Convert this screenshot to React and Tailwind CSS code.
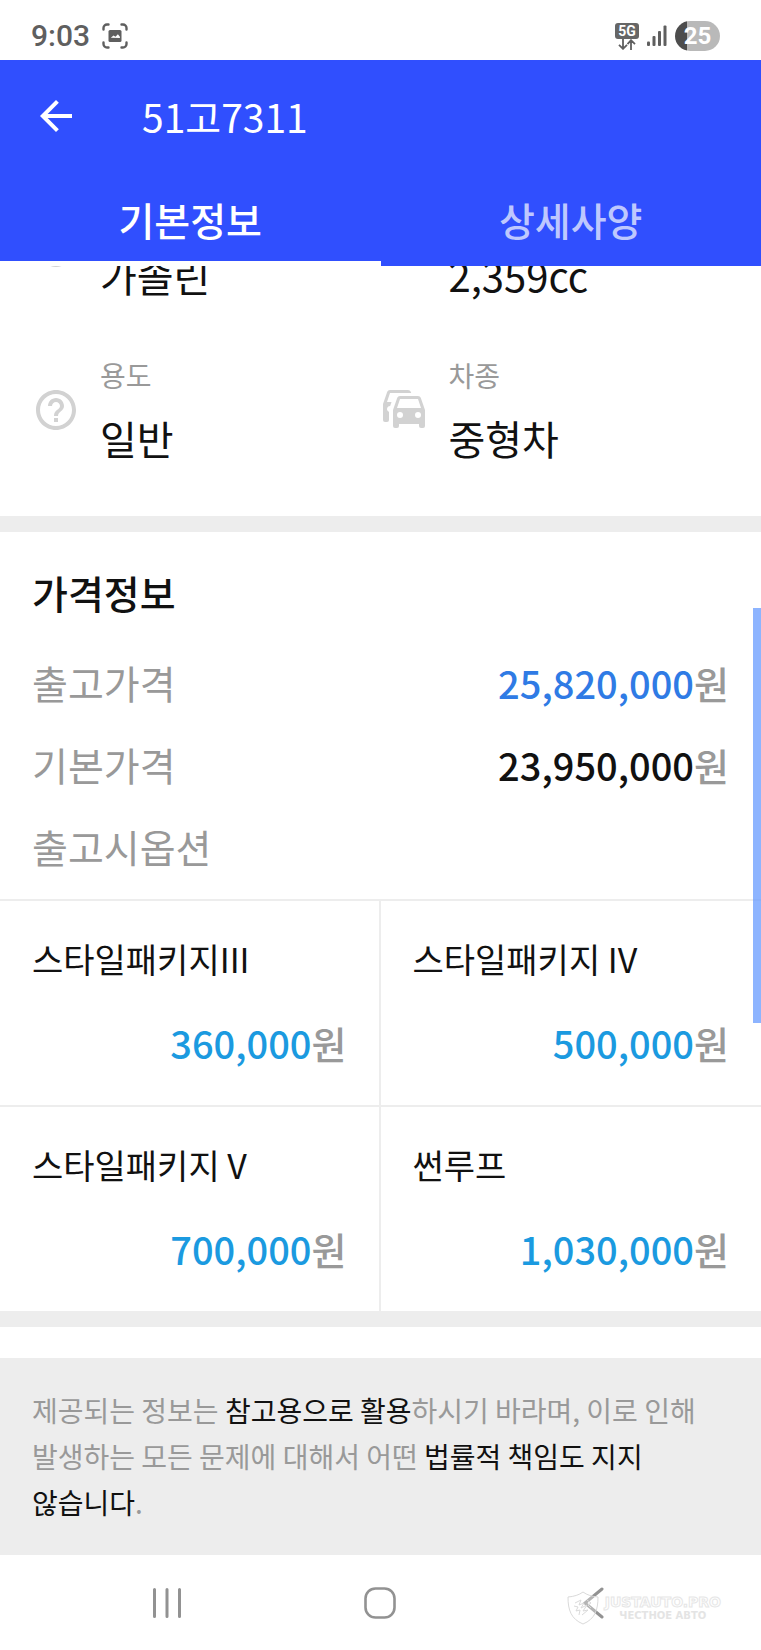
import React, { useState } from 'react';
import {
  MdArrowBack,
  MdHelpOutline,
  MdOutlineSpeed,
  MdOutlineWaterDrop,
} from 'react-icons/md';

const tabs = [
  { id: 'basic', label: '기본정보' },
  { id: 'detail', label: '상세사양' },
];

const specs = [
  { label: '연료', value: '가솔린', icon: MdOutlineWaterDrop },
  { label: '배기량', value: '2,359cc', icon: MdOutlineSpeed },
  { label: '용도', value: '일반', icon: MdHelpOutline },
  { label: '차종', value: '중형차', icon: CarsIcon },
];

const options = [
  { name: '스타일패키지III', price: '360,000' },
  { name: '스타일패키지 IV', price: '500,000' },
  { name: '스타일패키지 V', price: '700,000' },
  { name: '썬루프', price: '1,030,000' },
];

function CarsIcon({ className }) {
  return (
    <svg viewBox="0 0 24 24" fill="currentColor" className={className} aria-hidden="true">
      <path d="M8,11L9.5,6.5H18.5L20,11M18.5,16A1.5,1.5 0 0,1 17,14.5A1.5,1.5 0 0,1 18.5,13A1.5,1.5 0 0,1 20,14.5A1.5,1.5 0 0,1 18.5,16M9.5,16A1.5,1.5 0 0,1 8,14.5A1.5,1.5 0 0,1 9.5,13A1.5,1.5 0 0,1 11,14.5A1.5,1.5 0 0,1 9.5,16M19.92,6C19.71,5.4 19.14,5 18.5,5H9.5C8.86,5 8.29,5.4 8.08,6L6,12V20A1,1 0 0,0 7,21H8A1,1 0 0,0 9,20V19H19V20A1,1 0 0,0 20,21H21A1,1 0 0,0 22,20V12L19.92,6M14.92,3C14.71,2.4 14.14,2 13.5,2H4.5C3.86,2 3.29,2.4 3.08,3L1,9V17A1,1 0 0,0 2,18H3A1,1 0 0,0 4,17V12.91C3.22,12.63 2.82,11.77 3.1,11C3.32,10.4 3.87,10 4.5,10H4.57L5.27,8H3L4.5,3.5H15.09L14.92,3Z" />
    </svg>
  );
}

function StatusBar() {
  return (
    <div className="flex items-center justify-between h-[60px] pl-[31px] pr-[41px] pt-3 text-[#5f5f5f] font-['Roboto',sans-serif]">
      <div className="flex items-center gap-3">
        <span className="text-[30px] leading-8 font-medium">9:03</span>
        <svg viewBox="0 0 26 26" className="w-[26px] h-[26px]" fill="none" stroke="currentColor" strokeWidth="2.4" strokeLinecap="round" aria-hidden="true">
          <path d="M1.5 6.5V5a3.5 3.5 0 0 1 3.5-3.5h1.5M19.5 1.5H21a3.5 3.5 0 0 1 3.5 3.5v1.5M24.5 19.5V21a3.5 3.5 0 0 1-3.5 3.5h-1.5M6.5 24.5H5A3.5 3.5 0 0 1 1.5 21v-1.5" />
          <rect x="6.5" y="7" width="13" height="12" rx="1.5" fill="currentColor" stroke="none" />
          <path d="M8.8 14.8l2.7-2.2 2 1.2 2.4-2.6 2 2.6v1.2z" fill="#fff" stroke="none" />
        </svg>
      </div>

      <div className="flex items-center gap-2">
        <div className="flex flex-col items-center w-6">
          <span className="w-6 h-4 rounded-[3px] bg-[#666] text-white text-[14px] leading-4 font-bold text-center">5G</span>
          <svg viewBox="0 0 18 11" className="w-[18px] h-[11px]" fill="none" stroke="currentColor" strokeWidth="1.8" aria-hidden="true">
            <path d="M5 0v9.5M1 5.8l4 4 4-4M13 11V1.5M9.5 5.2l3.5-4 4 4" />
          </svg>
        </div>
        <svg viewBox="0 0 20 22" className="w-5 h-[22px]" fill="currentColor" aria-hidden="true">
          <rect x="0" y="16.5" width="3" height="4.5" rx="1" />
          <rect x="5.5" y="11" width="3" height="10" rx="1" />
          <rect x="11" y="6" width="3" height="15" rx="1" />
          <rect x="16.5" y="0.5" width="3" height="20.5" rx="1" />
        </svg>
        <div className="w-[45px] h-[30px] rounded-full bg-[linear-gradient(90deg,#4d4d4d_12px,#b9b9b9_12px)] text-white text-[24px] leading-[30px] font-bold text-center">
          25
        </div>
      </div>
    </div>
  );
}

function Price({ value, color }) {
  return (
    <span className="font-medium text-[#999]">
      <span className={color}>{value}</span>원
    </span>
  );
}

function PriceRow({ label, children }) {
  return (
    <div className="flex items-center justify-between h-[82px] px-8">
      <dt className="text-[39px] text-[#999]">{label}</dt>
      <dd className="text-[38px]">{children}</dd>
    </div>
  );
}

function Watermark() {
  return (
    <div className="absolute right-[40px] top-[36px] flex items-center gap-[6px] pointer-events-none">
      <svg viewBox="0 0 32 34" className="w-8 h-[34px]" fill="#ffffff50" stroke="#dadada" strokeWidth="1" aria-hidden="true">
        <path d="M16 1c4 3 9 4.500 15 5 0 13-3 22-15 27C4 28 1 19 1 6c6-.5 11-2 15-5z" />
        <path d="M8 12l6-3-2 5 5-2-3 5 6-3-4 6 5-1-6 5M7 15l4 1-2 4 4-1-1 5M20 9l4 3-3 2 3 3" fill="none" />
      </svg>
      <div className="flex flex-col items-center font-['DejaVu_Sans',sans-serif] text-[#e4e4e4]">
        <span className="text-[14px] leading-4 font-bold text-white [-webkit-text-stroke:1px_#e6e6e6]">JUSTAUTO.PRO</span>
        <span className="text-[10px] leading-3 font-bold">ЧЕСТНОЕ АВТО</span>
      </div>
    </div>
  );
}

export default function App() {
  const [activeTab, setActiveTab] = useState('basic');

  return (
    <div className="relative bg-white text-[#111] font-['Noto_Sans_CJK_KR',sans-serif]">
      <StatusBar />

      <header className="bg-[#304ffe] text-white">
        <div className="flex items-center gap-[62px] h-28 px-8">
          <button type="button" aria-label="뒤로">
            <MdArrowBack className="w-12 h-12" />
          </button>
          <h1 className="text-[39px] leading-[56px]">51고7311</h1>
        </div>
        <div className="grid grid-cols-2" role="tablist">
          {tabs.map((tab) => {
            const isActive = tab.id === activeTab;
            return (
              <button
                key={tab.id}
                type="button"
                role="tab"
                aria-selected={isActive}
                onClick={() => setActiveTab(tab.id)}
                className={`h-[94px] pt-1 border-b-[5px] text-[39px] leading-[60px] font-medium ${isActive ? 'border-white' : 'border-transparent text-white/70'}`}
              >
                {tab.label}
              </button>
            );
          })}
        </div>
      </header>

      <main>
        {/* Specs, scrolled partly under the header */}
        <section className="overflow-hidden border-b-[16px] border-[#ededed] px-8 pb-12">
          <dl className="grid grid-cols-2 gap-y-[47px] -mt-[77px]">
            {specs.map(({ label, value, icon: Icon }) => (
              <div key={label} className="flex items-center gap-5">
                <Icon className="w-12 h-12 shrink-0 text-[#d2d2d2]" />
                <div className="flex flex-col gap-3 pb-0.5">
                  <dt className="text-[28px] leading-[46px] text-[#999]">{label}</dt>
                  <dd className="text-[40px] leading-[56px]">{value}</dd>
                </div>
              </div>
            ))}
          </dl>
        </section>

        {/* Prices */}
        <section className="border-b-[16px] border-[#ededed]">
          <h2 className="px-8 pt-[30px] pb-[19px] text-[39px] leading-[60px] font-medium">가격정보</h2>
          <dl className="pb-3">
            <PriceRow label="출고가격">
              <Price value="25,820,000" color="text-[#2f7be5]" />
            </PriceRow>
            <PriceRow label="기본가격">
              <Price value="23,950,000" color="text-[#111]" />
            </PriceRow>
            <PriceRow label="출고시옵션" />
          </dl>
          <ul className="grid grid-cols-2">
            {options.map((option) => (
              <li key={option.name} className="border-t-2 border-[#ededed] odd:border-r-2 px-8 pt-[31px] pb-8">
                <p className="text-[34px] leading-[54px]">{option.name}</p>
                <p className="mt-[27px] text-[38px] leading-[60px] text-right">
                  <Price value={option.price} color="text-[#1b9ae0]" />
                </p>
              </li>
            ))}
          </ul>
        </section>

        <p className="mt-[31px] px-8 pt-[29px] pb-[30px] bg-[#ededed] text-[28px] leading-[46px] text-[#999] break-keep">
          제공되는 정보는 <span className="text-[#111]">참고용으로 활용</span>하시기 바라며, 이로 인해 발생하는 모든 문제에 대해서 어떤{' '}
          <span className="text-[#111]">법률적 책임도 지지 않습니다</span>.
        </p>
      </main>

      <nav className="relative grid grid-cols-3 items-center justify-items-center h-[95px] pl-[60px] pr-[62px] text-[#929292]">
        <button type="button" aria-label="최근 앱">
          <svg viewBox="0 0 32 32" className="w-8 h-8" fill="none" stroke="currentColor" strokeWidth="3" strokeLinecap="round">
            <path d="M3.5 2.5v27M16 2.5v27M28.5 2.5v27" />
          </svg>
        </button>
        <button type="button" aria-label="홈">
          <svg viewBox="0 0 32 32" className="w-8 h-8" fill="none" stroke="currentColor" strokeWidth="2.6">
            <rect x="1.5" y="1.5" width="29" height="29" rx="10" />
          </svg>
        </button>
        <button type="button" aria-label="뒤로 가기">
          <svg viewBox="0 0 32 32" className="w-8 h-8" fill="none" stroke="currentColor" strokeWidth="3" strokeLinecap="round">
            <path d="M25 2L8 16 25 30" />
          </svg>
        </button>
        <Watermark />
      </nav>

      {/* Scroll thumb */}
      <div className="absolute right-0 top-[608px] w-2 h-[415px] bg-[#5c94ff]/70" />
    </div>
  );
}
